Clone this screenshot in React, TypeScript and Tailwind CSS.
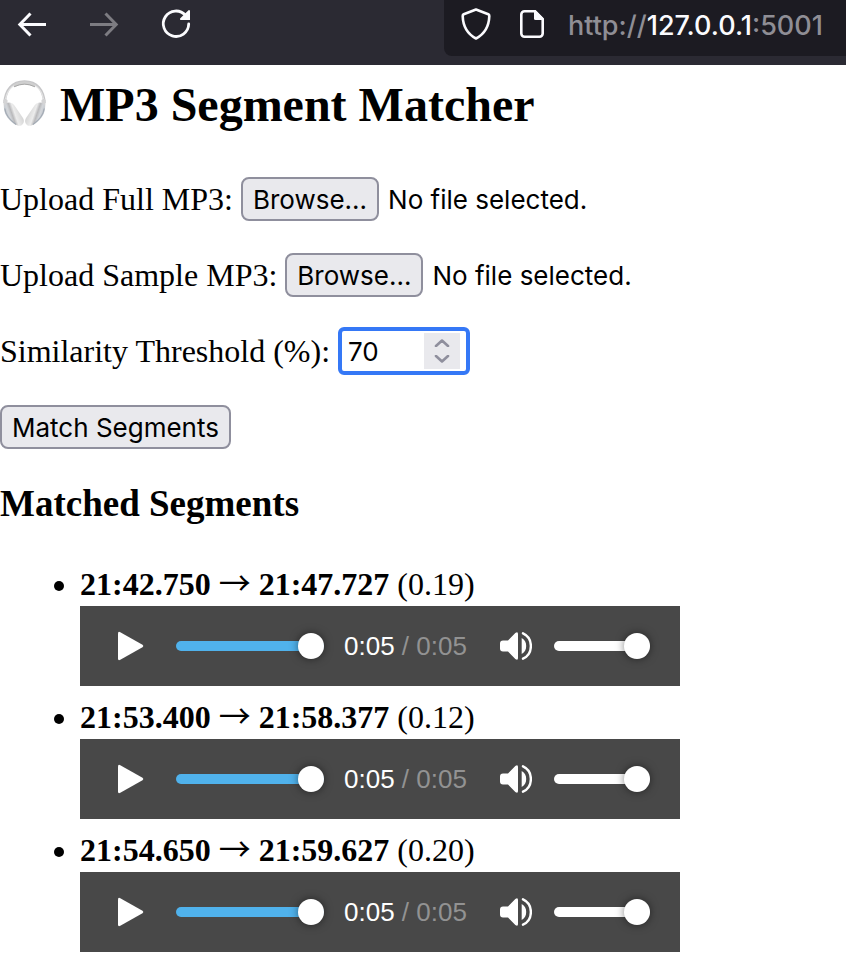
import { useId, useRef, useState } from "react";

const segments = [
  { start: "21:42.750", end: "21:47.727", score: "0.19" },
  { start: "21:53.400", end: "21:58.377", score: "0.12" },
  { start: "21:54.650", end: "21:59.627", score: "0.20" },
];

const buttonStyle =
  "h-11 shrink-0 whitespace-nowrap rounded-lg border-2 border-[#8f8f9d] bg-[#e9e9ed] px-[10px] pt-0.5 font-['Inter',sans-serif] text-[26px] leading-8";

const rangeStyle =
  "m-0 h-[26px] shrink-0 appearance-none bg-transparent [&::-webkit-slider-runnable-track]:h-[10px] [&::-webkit-slider-runnable-track]:rounded-full [&::-webkit-slider-thumb]:-mt-2 [&::-webkit-slider-thumb]:size-[26px] [&::-webkit-slider-thumb]:appearance-none [&::-webkit-slider-thumb]:rounded-full [&::-webkit-slider-thumb]:bg-white [&::-webkit-slider-thumb]:shadow-[0_0_8px_rgba(0,0,0,0.5)]";

function Toolbar() {
  return (
    <header className="flex h-[65px] items-start bg-[#2b2a33] text-[#fbfbfe]">
      <nav className="flex flex-1 gap-10 pl-4 pt-2">
        <button type="button" aria-label="Back">
          <svg className="size-8" viewBox="0 0 32 32" fill="none" stroke="currentColor" strokeWidth="3" strokeLinejoin="miter">
            <path d="M30 16.500H4M14.500 5.500L3.800 16.500L14.500 27.500" />
          </svg>
        </button>
        <button type="button" aria-label="Forward" className="text-[#7d7c82]">
          <svg className="size-8" viewBox="0 0 32 32" fill="none" stroke="currentColor" strokeWidth="3" strokeLinejoin="miter">
            <path d="M2 16.500H28M17.500 5.500L28.200 16.500L17.500 27.500" />
          </svg>
        </button>
        <button type="button" aria-label="Reload">
          <svg className="size-8" viewBox="0 0 32 32" fill="none">
            <path d="M25.500 7.300A12.700 12.700 0 1 0 28.700 16" stroke="currentColor" strokeWidth="2.800" strokeLinecap="round" />
            <path d="M30 3V12H21a1 1 0 0 1-.7-1.700L28.500 2.300A.9.9 0 0 1 30 3Z" fill="currentColor" />
          </svg>
        </button>
      </nav>
      <div className="flex h-14 w-[402px] items-start gap-6 rounded-bl-lg bg-[#1c1b22] pl-4 pt-2">
        <svg className="size-8 shrink-0" viewBox="0 0 32 32" fill="none" stroke="currentColor" strokeWidth="2.600" strokeLinejoin="round">
          <path d="M16 1.500L28.300 6.300Q29.300 6.700 29.300 8C29 18 25.500 25.500 16 30.500C6.500 25.500 3 18 2.700 8Q2.700 6.700 3.700 6.300Z" />
        </svg>
        <svg className="size-8 shrink-0" viewBox="0 0 32 32" fill="none">
          <path d="M19 3.300H8.500A3.200 3.200 0 0 0 5.300 6.500V25.500A3.200 3.200 0 0 0 8.500 28.700H23.500A3.200 3.200 0 0 0 26.700 25.500V11.500Z" stroke="currentColor" strokeWidth="2.600" strokeLinejoin="round" />
          <path d="M18 2H19.500L28 10.500V12H19.500A1.500 1.500 0 0 1 18 10.500Z" fill="currentColor" />
        </svg>
        <p className="-ml-1 whitespace-nowrap font-['Inter',sans-serif] text-[27px] leading-9 font-medium text-[#8f8e95]">
          http://<span className="text-[#fbfbfe]">127.0.0.1</span>:5001
        </p>
      </div>
    </header>
  );
}

function Headphones() {
  return (
    <svg className="mb-1 h-12 w-12 shrink-0" viewBox="0 0 48 48" fill="none" aria-hidden="true">
      <defs>
        <linearGradient id="cupLeft" x1="0" y1="0.700" x2="1" y2="0.300">
          <stop offset="0" stopColor="#b4bac2" />
          <stop offset="0.300" stopColor="#d3d6da" />
          <stop offset="0.420" stopColor="#b9b9bb" />
          <stop offset="0.550" stopColor="#ececec" />
          <stop offset="1" stopColor="#c9c9c9" />
        </linearGradient>
        <linearGradient id="cupRight" x1="1" y1="0.700" x2="0" y2="0.300">
          <stop offset="0" stopColor="#b4bac2" />
          <stop offset="0.300" stopColor="#d3d6da" />
          <stop offset="0.420" stopColor="#b9b9bb" />
          <stop offset="0.550" stopColor="#ececec" />
          <stop offset="1" stopColor="#c9c9c9" />
        </linearGradient>
      </defs>
      <path d="M4.500 24C5.500 11 12 2.500 24.500 2.500S43.500 11 44.500 24" stroke="#c6c6c8" strokeWidth="2.600" />
      <path d="M5.500 20C7.500 10 13.500 4 24.500 4S41.500 10 43.500 20" stroke="#e4e4e4" strokeWidth="1.200" />
      <path d="M13 5.500Q24.500 -1 36 5.500L34.500 8Q24.500 3 14.500 8Z" fill="#cfcfcf" />
      <path d="M14 7.800Q24.500 2.500 35 7.800" stroke="#a8a8a8" strokeWidth="1" />
      <path d="M3.200 21Q5 19 7.500 21L7.500 28L4 30ZM45.800 21Q44 19 41.500 21L41.500 28L45 30Z" fill="#d4d4d5" />
      <path d="M4.200 27C5.500 23 11.500 22 14.500 26.500L23 39C25.500 43 22.500 47.500 18.500 46.800L16.500 46C10 43.500 2.500 34 4.200 27Z" fill="url(#cupLeft)" />
      <path d="M44.800 27C43.500 23 37.500 22 34.500 26.500L26 39C23.500 43 26.500 47.500 30.500 46.800L32.500 46C39 43.500 46.500 34 44.800 27Z" fill="url(#cupRight)" />
      <path d="M4.800 29.500C5.500 35 10.500 41.500 16 45.500M44.200 29.500C43.500 35 38.500 41.500 33 45.500" stroke="#a3abb5" strokeWidth="1.200" />
    </svg>
  );
}

function FileField({ label }: { label: string }) {
  const id = useId();
  const input = useRef<HTMLInputElement>(null);
  const [name, setName] = useState("No file selected.");
  return (
    <div className="flex h-11 items-center gap-2">
      <label htmlFor={id} className="whitespace-nowrap">{label}</label>
      <input
        id={id}
        ref={input}
        type="file"
        accept="audio/mpeg"
        className="hidden"
        onChange={(e) => setName(e.target.files?.[0]?.name ?? "No file selected.")}
      />
      <button type="button" className={buttonStyle} onClick={() => input.current?.click()}>
        Browse...
      </button>
      <span className="whitespace-nowrap pt-0.5 pl-px font-['Inter',sans-serif] text-[26px] leading-8">{name}</span>
    </div>
  );
}

function ThresholdField() {
  const [value, setValue] = useState(70);
  return (
    <div className="flex h-11 items-center gap-2">
      <label htmlFor="threshold" className="whitespace-nowrap">Similarity Threshold (%):</label>
      <div className="flex h-12 w-[132px] items-center rounded-md border-4 border-[#3578f6] bg-white px-[6px]">
        <input
          id="threshold"
          type="number"
          value={value}
          onChange={(e) => setValue(Number(e.target.value))}
          className="h-9 w-0 min-w-0 flex-1 appearance-none bg-transparent pt-0.5 font-['Inter',sans-serif] text-[26px] outline-none [&::-webkit-inner-spin-button]:appearance-none"
        />
        <div className="flex h-9 w-9 flex-col bg-[#e9e9ed] text-[#8f8f9d]">
          <button type="button" aria-label="Increase" className="flex flex-1 items-end justify-center pb-1" onClick={() => setValue(value + 1)}>
            <svg className="h-2 w-4" viewBox="0 0 16 8" fill="none" stroke="currentColor" strokeWidth="2.600" strokeLinecap="round" strokeLinejoin="round">
              <path d="M2 7L8 1.500L14 7" />
            </svg>
          </button>
          <button type="button" aria-label="Decrease" className="flex flex-1 items-start justify-center pt-1" onClick={() => setValue(value - 1)}>
            <svg className="h-2 w-4" viewBox="0 0 16 8" fill="none" stroke="currentColor" strokeWidth="2.600" strokeLinecap="round" strokeLinejoin="round">
              <path d="M2 1L8 6.500L14 1" />
            </svg>
          </button>
        </div>
      </div>
    </div>
  );
}

function Player() {
  return (
    <div className="flex h-20 w-[600px] items-center bg-[#484848] pl-[34px] font-['Liberation_Sans',Arial,sans-serif] text-[26px] leading-8 text-white">
      <button type="button" aria-label="Play" className="mr-[30px]">
        <svg className="size-8" viewBox="0 0 32 32" fill="currentColor">
          <path d="M4 3.500Q4 1 6.300 2.200L28.500 14.800Q30.300 16 28.500 17.200L6.300 29.800Q4 31 4 28.500Z" />
        </svg>
      </button>
      <input type="range" aria-label="Position" defaultValue={100} className={`${rangeStyle} w-[148px] [&::-webkit-slider-runnable-track]:bg-[#50b2ec]`} />
      <p className="ml-5 whitespace-nowrap">
        0:05<span className="text-[#929292]"> / 0:05</span>
      </p>
      <button type="button" aria-label="Mute" className="ml-[33px]">
        <svg className="size-8" viewBox="0 0 32 32" fill="none">
          <path d="M3 10.500H8L15.300 3Q18 1 18 4V28Q18 31 15.300 29L8 21.500H3Q0 21.500 0 18.500V13.500Q0 10.500 3 10.500Z" fill="currentColor" />
          <path d="M21.700 8C27.700 11 27.700 21 21.700 24Z" fill="currentColor" />
          <path d="M23 3.300C33.500 8 33.500 24 23 28.700" stroke="currentColor" strokeWidth="2.400" strokeLinecap="round" />
        </svg>
      </button>
      <input type="range" aria-label="Volume" defaultValue={100} className={`${rangeStyle} ml-[22px] w-24 [&::-webkit-slider-runnable-track]:bg-white`} />
    </div>
  );
}

export default function App() {
  return (
    <div className="min-h-screen overflow-hidden bg-white font-['Liberation_Serif','Times_New_Roman',serif] text-[32px] leading-9 text-black">
      <Toolbar />
      <main className="pt-3">
        <h1 className="flex h-14 items-center gap-3 text-5xl leading-14 font-bold">
          <Headphones />
          <span className="whitespace-nowrap">MP3 Segment Matcher</span>
        </h1>
        <form className="mt-11 flex flex-col items-start gap-8" onSubmit={(e) => e.preventDefault()}>
          <FileField label="Upload Full MP3:" />
          <FileField label="Upload Sample MP3:" />
          <ThresholdField />
          <button type="submit" className={buttonStyle}>Match Segments</button>
        </form>
        <h3 className="mt-[33px] text-[37px] leading-11 font-bold">Matched Segments</h3>
        <ul className="mt-10 flex list-disc flex-col gap-[13px] pl-20">
          {segments.map((s) => (
            <li key={s.start}>
              <p className="pb-[3px] leading-[37px]">
                <strong>
                  {s.start} <span className="font-['Noto_Sans_CJK_JP',sans-serif] leading-6 font-normal">→</span> {s.end}
                </strong>{" "}
                ({s.score})
              </p>
              <Player />
            </li>
          ))}
        </ul>
      </main>
    </div>
  );
}
